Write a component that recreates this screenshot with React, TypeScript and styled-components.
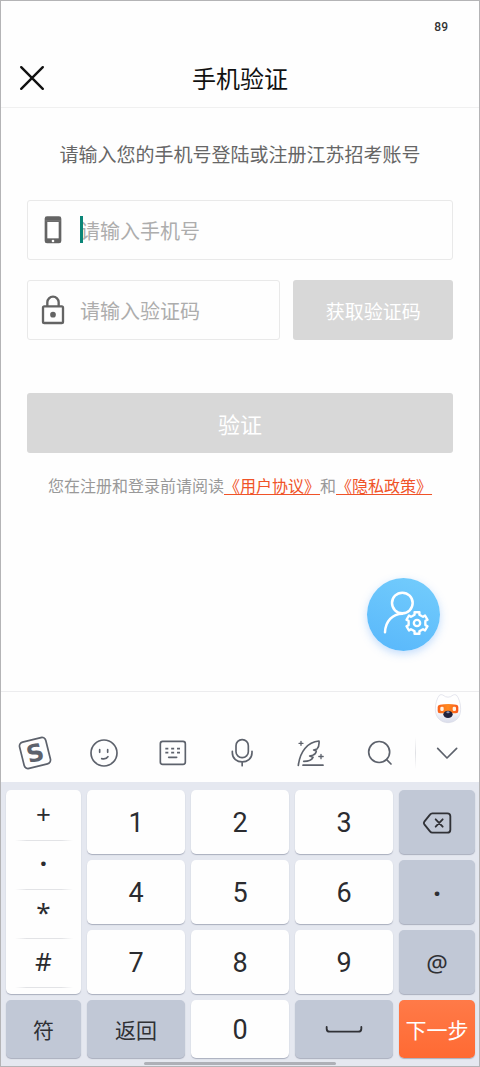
import React from 'react';
import styled, { createGlobalStyle } from 'styled-components';

const GlobalStyle = createGlobalStyle`
  *, *::before, *::after { box-sizing: border-box; }
  body {
    margin: 0;
    background: #fefefe;
    font-family: "Noto Sans CJK SC", "Noto Sans", sans-serif;
  }
  button, input { font: inherit; color: inherit; }
  button { margin: 0; padding: 0; border: 0; background: none; cursor: pointer; }
  svg { display: block; }
`;

const Screen = styled.div`
  display: flex;
  flex-direction: column;
  min-height: 100vh;
  border: 1px solid #b4b4b6;
  background: #fefefe;
`;

const StatusBar = styled.div`
  display: flex;
  justify-content: flex-end;
  align-items: center;
  height: 48px;
  padding: 4px 31px 0 0;
  font-family: Roboto, sans-serif;
  font-size: 12px;
  font-weight: 500;
  color: #333;
`;

const Header = styled.header`
  display: grid;
  grid-template-columns: 60px 1fr 60px;
  align-items: center;
  height: 59px;
  border-bottom: 1px solid #f0f0f0;
`;

const CloseButton = styled.button`
  display: grid;
  place-items: center;
  height: 48px;
  padding-left: 2px;
`;

const Title = styled.h1`
  margin: 0;
  font-size: 24px;
  font-weight: 400;
  line-height: 32px;
  text-align: center;
  color: #111;
`;

const Main = styled.main`
  position: relative;
  flex: 1;
  padding: 34px 26px 0;
`;

const Prompt = styled.p`
  margin: 0 0 34px;
  font-size: 19px;
  line-height: 24px;
  text-align: center;
  white-space: nowrap;
  color: #666;
`;

const Form = styled.form`
  display: grid;
  grid-template-columns: minmax(0, 254fr) minmax(0, 160fr);
  gap: 20px 13px;
`;

const Field = styled.label<{ $wide?: boolean; $caret?: boolean }>`
  position: relative;
  display: flex;
  align-items: center;
  height: 60px;
  grid-column: ${(p) => (p.$wide ? '1 / -1' : 'auto')};
  border: 1px solid #e9e9e9;
  border-radius: 3px;

  &::after {
    content: '';
    display: ${(p) => (p.$caret ? 'block' : 'none')};
    position: absolute;
    left: 52px;
    top: 15px;
    width: 3px;
    height: 27px;
    background: #0a8577;
  }
`;

const FieldIcon = styled.span`
  display: grid;
  place-items: center;
  flex: 0 0 52px;
  padding-right: 2px;
`;

const Input = styled.input`
  flex: 1;
  min-width: 0;
  height: 100%;
  padding: 0;
  border: 0;
  outline: 0;
  background: transparent;
  font-size: 20px;
  color: #333;

  &::placeholder { color: #adadad; opacity: 1; }
`;

const SubmitButton = styled.button<{ $wide?: boolean }>`
  height: 60px;
  grid-column: ${(p) => (p.$wide ? '1 / -1' : 'auto')};
  margin-top: ${(p) => (p.$wide ? '33px' : '0')};
  border-radius: 3px;
  background: #d8d8d8;
  color: #fff;
  font-size: ${(p) => (p.$wide ? '22px' : '19px')};
`;

const Legal = styled.p`
  margin: 20px 0 0;
  font-size: 16px;
  line-height: 24px;
  text-align: center;
  white-space: nowrap;
  color: #999;
`;

const LegalLink = styled.a`
  color: #f05328;
  text-decoration: underline;
  text-underline-offset: 2px;
`;

const FloatingButton = styled.button`
  position: absolute;
  right: 39px;
  bottom: 40px;
  width: 73px;
  height: 73px;
  border-radius: 50%;
  background: linear-gradient(200deg, #74cdfc, #58b7fb);
  box-shadow: 0 3px 8px rgba(90, 160, 250, 0.35);
`;

const Keyboard = styled.section`
  border-top: 1px solid #ececee;
`;

const MascotRow = styled.div`
  display: flex;
  justify-content: flex-end;
  height: 32px;
  padding: 1px 17px 0 0;
`;

const Toolbar = styled.div`
  display: grid;
  grid-template-columns: repeat(6, 69fr) 64fr;
  height: 58px;
`;

const Tool = styled.button<{ $divided?: boolean }>`
  display: grid;
  place-items: center;
  ${(p) =>
    p.$divided
      ? 'background: linear-gradient(transparent, #dfe0e4, transparent) left center / 1px 32px no-repeat;'
      : 'padding-right: 2px;'}
`;

const Keypad = styled.div`
  display: grid;
  grid-template-columns: 75fr 98fr 98fr 98fr 76fr;
  grid-template-rows: 64px 64px 64px 58px;
  gap: 6px;
  padding: 8px 4px 4px 5px;
  background: #e5e8f0;
`;

type Tone = 'light' | 'dark' | 'accent';

const tones: Record<Tone, string> = {
  light: 'background: #fefefe; color: #2b2c30; font-family: Roboto, sans-serif;',
  dark: 'background: #c1c8d6; color: #2f3034;',
  accent: 'background: linear-gradient(#ff7a48, #ff6a33); color: #fff;',
};

const Key = styled.button<{ $tone: Tone; $size: number; $bold?: boolean }>`
  display: grid;
  place-items: center;
  min-width: 0;
  padding-top: 1px;
  border-radius: 5px;
  box-shadow: 0 1px 1px rgba(120, 128, 150, 0.55);
  font-family: "Noto Sans", "Noto Sans CJK SC", sans-serif;
  font-size: ${(p) => p.$size}px;
  font-weight: ${(p) => (p.$bold ? 700 : 400)};
  line-height: 32px;
  white-space: nowrap;
  ${(p) => tones[p.$tone]}
`;

const SymbolColumn = styled.div`
  grid-row: span 3;
  display: flex;
  flex-direction: column;
  padding-top: 2px;
  border-radius: 5px;
  background: #fefefe;
  box-shadow: 0 1px 1px rgba(120, 128, 150, 0.55);
`;

const SymbolKey = styled.button<{ $bold?: boolean }>`
  height: 49px;
  padding-bottom: 5px;
  font-family: "Noto Sans", sans-serif;
  font-size: 26px;
  font-weight: ${(p) => (p.$bold ? 700 : 400)};
  line-height: 32px;
  color: #2b2c30;
  background: linear-gradient(90deg, transparent, #e2e3e6 20%, #e2e3e6 80%, transparent)
    center bottom / 58px 1px no-repeat;
`;

const HomeArea = styled.div`
  display: flex;
  justify-content: center;
  height: 4px;
  background: #e5e8f0;
`;

const HomeIndicator = styled.div`
  width: 40%;
  height: 3px;
  border-radius: 2px;
  background: #aeb0b7;
`;

const line = {
  fill: 'none',
  stroke: '#5d626c',
  strokeWidth: 5,
  strokeLinecap: 'round' as const,
  strokeLinejoin: 'round' as const,
};

const gearPath = (cx: number, cy: number) => {
  const points: string[] = [];
  for (let i = 0; i < 6; i++) {
    [[-27, 25], [-16, 26], [-13, 33], [13, 33], [16, 26], [27, 25]].forEach(([offset, radius]) => {
      const angle = ((i * 60 - 90 + offset) * Math.PI) / 180;
      points.push(`${(cx + radius * Math.cos(angle)).toFixed(1)} ${(cy + radius * Math.sin(angle)).toFixed(1)}`);
    });
  }
  return `M${points.join('L')}Z`;
};

const CloseIcon = () => (
  <svg width="26" height="26" viewBox="0 0 26 26" fill="none" stroke="#111" strokeWidth="2.4" strokeLinecap="round">
    <path d="M2.2 2.2 23.8 23.8M23.8 2.2 2.2 23.8" />
  </svg>
);

const PhoneIcon = () => (
  <svg width="18" height="28" viewBox="133 104 54 84">
    <rect x="135" y="105" width="50" height="81" rx="7" fill="#646464" />
    <rect x="143" y="122" width="34" height="49" fill="#fff" />
    <path d="M137 118.500h46" stroke="#858585" strokeWidth="2" />
    <circle cx="160" cy="179" r="4" fill="#fff" />
  </svg>
);

const LockIcon = () => (
  <svg width="24" height="30" viewBox="124 343 72 90" fill="none" stroke="#646464" strokeWidth="7">
    <rect x="130" y="377" width="60" height="50" rx="4" />
    <path d="M143 377v-12a17 17 0 0 1 34 0v12" />
    <circle cx="160" cy="402" r="8.500" fill="#646464" stroke="none" />
  </svg>
);

const AccountIcon = () => (
  <svg width="73" height="73" viewBox="81 54 219 219" fill="none" stroke="#fff" strokeLinecap="round" strokeLinejoin="round">
    <circle cx="187" cy="129" r="31" strokeWidth="7.500" />
    <path d="M187 161C158 161 136 184 135 217" strokeWidth="7.500" />
    <path d={gearPath(231, 189)} fill="#62c0fb" strokeWidth="7" />
    <circle cx="231" cy="189" r="9.500" strokeWidth="7" />
  </svg>
);

const MascotIcon = () => (
  <svg width="28" height="31" viewBox="580 40 84 93">
    <defs>
      <linearGradient id="fur" x1="0" y1="0" x2="0" y2="1">
        <stop offset="0.5" stopColor="#fff" />
        <stop offset="1" stopColor="#d9dcea" />
      </linearGradient>
      <linearGradient id="visor" x1="0" y1="0" x2="1" y2="0">
        <stop offset="0" stopColor="#f9601c" />
        <stop offset="0.5" stopColor="#ff8a1e" />
        <stop offset="1" stopColor="#f9551c" />
      </linearGradient>
    </defs>
    <path
      d="M597 46C603 43 609 47 614 51Q622 54 630 51C635 47 641 43 647 46C655 55 660 72 660 89C660 114 643 129 622 129S584 114 584 89C584 72 589 55 597 46Z"
      fill="url(#fur)"
      stroke="#d8dae6"
      strokeWidth="2"
    />
    <path d="M598 75Q622 71 647 75Q653 76 653 82V94Q653 101 646 101H598Q591 101 591 94V82Q591 76 598 75Z" fill="url(#visor)" />
    <rect x="599" y="81" width="10" height="13" rx="4" fill="#fff3e4" />
    <rect x="636" y="81" width="10" height="13" rx="4" fill="#fff3e4" />
    <ellipse cx="622" cy="104" rx="14" ry="11" fill="#20223c" />
    <ellipse cx="622" cy="98" rx="5" ry="3" fill="#8d93b5" />
  </svg>
);

const LogoIcon = () => (
  <svg width="36" height="36" viewBox="0 0 36 36">
    <g transform="rotate(-14 18 18)">
      <rect x="4.500" y="4.500" width="27" height="27" rx="4" fill="none" stroke="#5d626c" strokeWidth="1.700" />
      <text x="18" y="26.500" textAnchor="middle" fontFamily="DejaVu Sans, sans-serif" fontWeight="700" fontSize="24" fill="#5d626c">S</text>
    </g>
  </svg>
);

const SmileIcon = () => (
  <svg width="30" height="30" viewBox="265 175 90 90" {...line}>
    <circle cx="310" cy="220" r="39" />
    <path d="M297 210v8M321 210v8M303 237Q317 240 322 231" />
  </svg>
);

const KeyboardIcon = () => (
  <svg width="30" height="30" viewBox="474 175 90 90" {...line}>
    <rect x="481" y="185" width="75" height="69" rx="7" />
    <path d="M496 207h9M513.500 207h9M531 207h9M496 219h9M513.500 219h9M531 219h9" strokeLinecap="butt" />
    <path d="M506 233h24" />
  </svg>
);

const MicIcon = () => (
  <svg width="30" height="30" viewBox="0 0 90 90" {...line}>
    <rect x="27" y="5" width="37" height="54" rx="18" />
    <path d="M16 40v4c0 37 59 37 59 0v-4M45.500 72v11" />
  </svg>
);

const FeatherIcon = () => (
  <svg width="30" height="30" viewBox="168 175 90 90" {...line}>
    <path d="M175 257C180 216 202 187 237 184C238 194 236 203 231 208L221 211L229 214C228 221 224 225 218 227L209 229L219 233C215 242 207 245 191 245" />
    <path d="M189 256.500h60" />
    <path d="M183 185v12M177 191h12M243 224v13M236.500 230.500h13" strokeWidth="4" />
  </svg>
);

const SearchIcon = () => (
  <svg width="30" height="30" viewBox="374 173 90 90" {...line}>
    <circle cx="416.500" cy="215" r="31.500" />
    <path d="M439 238l13 13" />
  </svg>
);

const ChevronIcon = () => (
  <svg width="30" height="30" viewBox="578 175 90 90" {...line}>
    <path d="M595 206l28 29 29-29" />
  </svg>
);

const BackspaceIcon = () => (
  <svg width="30" height="24" viewBox="546 89 90 72" {...line} stroke="#303136" strokeWidth="5.500">
    <path d="M577 96h45q9 0 9 9v40q0 9-9 9h-45q-4 0-7-4l-17-21q-3-4 0-8l17-21q3-4 7-4Z" />
    <path d="M587 114l21 22M608 114l-21 22" />
  </svg>
);

const SpaceIcon = () => (
  <svg width="38" height="10" viewBox="255 315 114 30" {...line} stroke="#303136" strokeWidth="5.500">
    <path d="M260 321v5q0 9 9 9h86q9 0 9-9v-5" />
  </svg>
);

const tools = [
  { label: '搜狗输入法', icon: <LogoIcon /> },
  { label: '表情', icon: <SmileIcon /> },
  { label: '切换键盘', icon: <KeyboardIcon /> },
  { label: '语音输入', icon: <MicIcon /> },
  { label: '智能写作', icon: <FeatherIcon /> },
  { label: '搜索', icon: <SearchIcon /> },
  { label: '收起键盘', icon: <ChevronIcon />, divided: true },
];

const keys: { label: string; tone: Tone; size: number; bold?: boolean; icon?: React.ReactNode }[] = [
  { label: '1', tone: 'light', size: 27 },
  { label: '2', tone: 'light', size: 27 },
  { label: '3', tone: 'light', size: 27 },
  { label: '删除', tone: 'dark', size: 21, icon: <BackspaceIcon /> },
  { label: '4', tone: 'light', size: 27 },
  { label: '5', tone: 'light', size: 27 },
  { label: '6', tone: 'light', size: 27 },
  { label: '·', tone: 'dark', size: 27, bold: true },
  { label: '7', tone: 'light', size: 27 },
  { label: '8', tone: 'light', size: 27 },
  { label: '9', tone: 'light', size: 27 },
  { label: '@', tone: 'dark', size: 24 },
  { label: '符', tone: 'dark', size: 21 },
  { label: '返回', tone: 'dark', size: 21 },
  { label: '0', tone: 'light', size: 27 },
  { label: '空格', tone: 'dark', size: 21, icon: <SpaceIcon /> },
  { label: '下一步', tone: 'accent', size: 21 },
];

export default function App() {
  return (
    <>
      <GlobalStyle />
      <Screen>
        <StatusBar>89</StatusBar>
        <Header>
          <CloseButton type="button" aria-label="关闭">
            <CloseIcon />
          </CloseButton>
          <Title>手机验证</Title>
        </Header>

        <Main>
          <Prompt>请输入您的手机号登陆或注册江苏招考账号</Prompt>
          <Form onSubmit={(e) => e.preventDefault()}>
            <Field $wide $caret>
              <FieldIcon><PhoneIcon /></FieldIcon>
              <Input type="tel" aria-label="手机号" placeholder="请输入手机号" />
            </Field>
            <Field>
              <FieldIcon><LockIcon /></FieldIcon>
              <Input type="text" inputMode="numeric" aria-label="验证码" placeholder="请输入验证码" />
            </Field>
            <SubmitButton type="button">获取验证码</SubmitButton>
            <SubmitButton type="submit" $wide>验证</SubmitButton>
          </Form>
          <Legal>
            您在注册和登录前请阅读<LegalLink href="#terms">《用户协议》</LegalLink>和<LegalLink href="#privacy">《隐私政策》</LegalLink>
          </Legal>
          <FloatingButton type="button" aria-label="账号设置">
            <AccountIcon />
          </FloatingButton>
        </Main>

        <Keyboard>
          <MascotRow><MascotIcon /></MascotRow>
          <Toolbar>
            {tools.map((tool) => (
              <Tool key={tool.label} type="button" aria-label={tool.label} $divided={tool.divided}>
                {tool.icon}
              </Tool>
            ))}
          </Toolbar>
          <Keypad>
            <SymbolColumn>
              {['+', '·', '*', '#'].map((symbol) => (
                <SymbolKey key={symbol} type="button" $bold={symbol === '·'}>{symbol}</SymbolKey>
              ))}
            </SymbolColumn>
            {keys.map((key) => (
              <Key key={key.label} type="button" $tone={key.tone} $size={key.size} $bold={key.bold} aria-label={key.label}>
                {key.icon ?? key.label}
              </Key>
            ))}
          </Keypad>
          <HomeArea><HomeIndicator /></HomeArea>
        </Keyboard>
      </Screen>
    </>
  );
}
